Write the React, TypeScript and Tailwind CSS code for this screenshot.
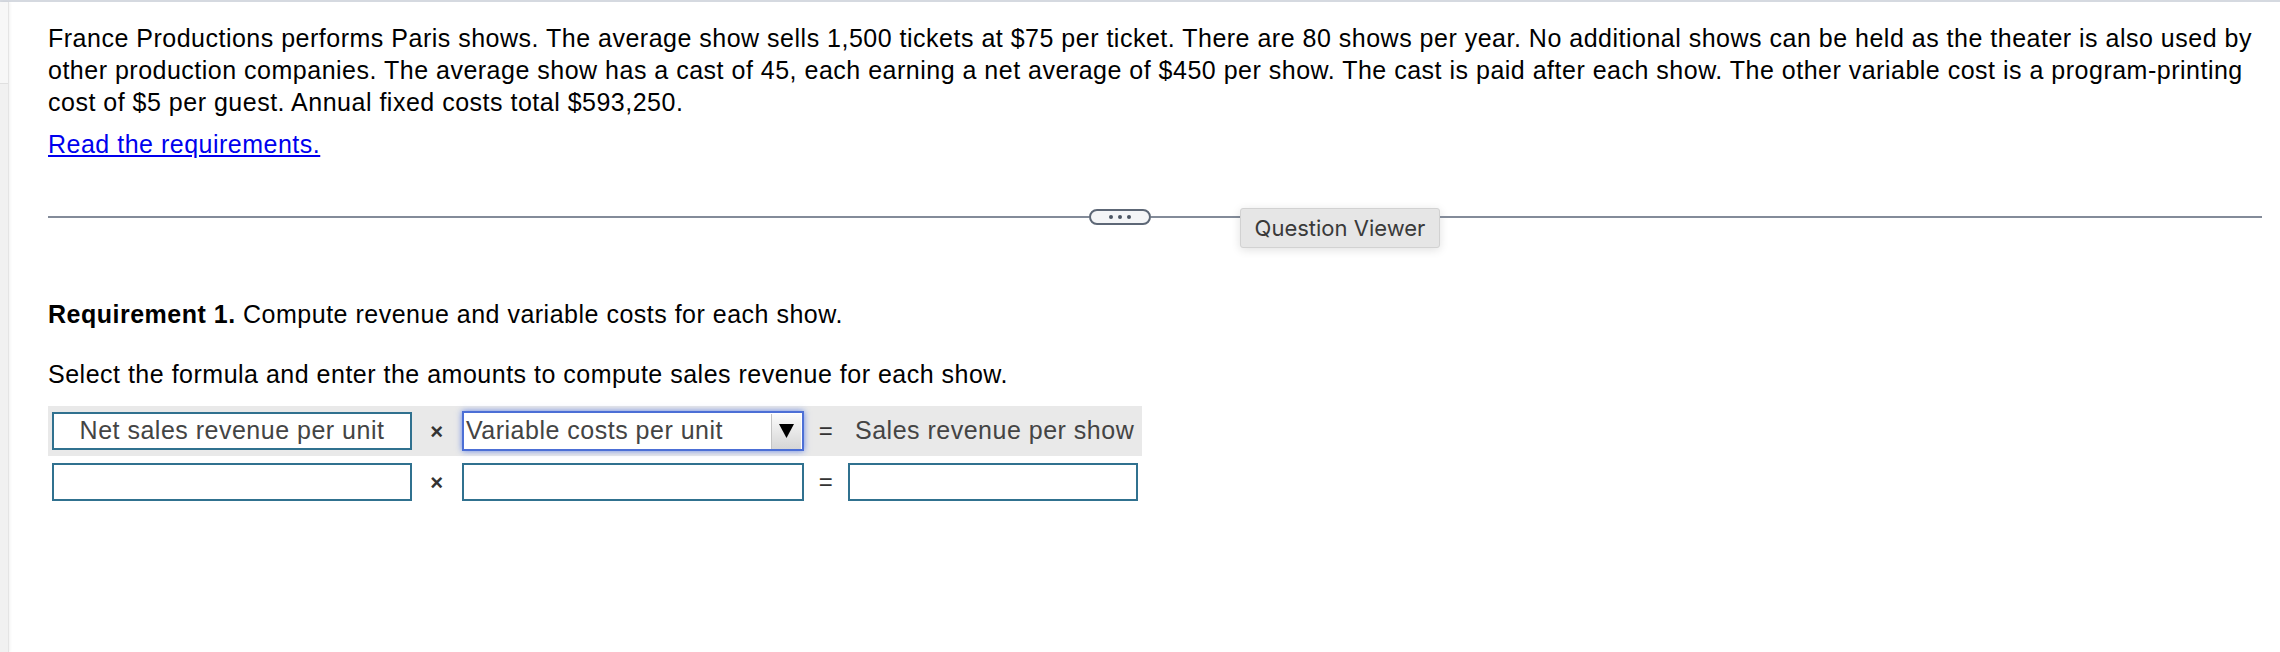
export default function App() {
    return <div className="flex min-h-screen bg-white border-t-2 border-[#d5d9e0] font-['Liberation_Sans',Arial,sans-serif] text-black">
        <SideStrip />
        <div className="flex-1 pl-[39px] pr-[18px] pt-[20px]">
            <p className="text-[25px] leading-[32px] tracking-[0.5px]">
                France Productions performs Paris shows. The average show sells 1,500 tickets at $75 per ticket. There are 80 shows per year. No additional shows can be held as the theater is also used by other production companies. The average show has a cast of 45, each earning a net average of $450 per show. The cast is paid after each show. The other variable cost is a program-printing cost of $5 per guest. Annual fixed costs total $593,250.
            </p>
            <p className="mt-[10px] text-[25px] leading-[32px] tracking-[0.5px]">
                <a href="#" className="text-[#0000ee] underline">Read the requirements.</a>
            </p>

            <Divider />

            <p className="mt-[50px] text-[25px] leading-[32px] tracking-[0.5px]">
                <span className="font-bold">Requirement 1.</span> Compute revenue and variable costs for each show.
            </p>
            <p className="mt-[28px] text-[25px] leading-[32px] tracking-[0.5px]">
                Select the formula and enter the amounts to compute sales revenue for each show.
            </p>

            <FormulaTable />
        </div>
    </div>
}

function SideStrip() {
    return <div className="w-[9px] shrink-0 flex flex-col border-r border-[#e4e4e4] shadow-[1px_0_3px_rgba(0,0,0,0.06)]">
        <div className="h-[82px] bg-[#f7f7f7] border-b border-[#e0e0e0]" />
        <div className="flex-1 bg-[#f1f1f1]" />
    </div>
}

function Divider() {
    return <div className="mt-[48px] flex items-start">
        <div className="mt-[8px] h-[2px] w-[1041px] bg-[#838b99]" />
        <div className="mt-[1px] h-[16px] w-[62px] rounded-full border-2 border-[#5d6776] bg-[#f4f5f7] flex items-center justify-center gap-[5px]">
            <span className="h-[4px] w-[4px] rounded-full bg-[#4b5563]" />
            <span className="h-[4px] w-[4px] rounded-full bg-[#4b5563]" />
            <span className="h-[4px] w-[4px] rounded-full bg-[#4b5563]" />
        </div>
        <div className="mt-[8px] h-[2px] w-[89px] bg-[#838b99]" />
        <div className="h-[40px] w-[200px] flex items-center justify-center rounded-[3px] border border-[#d2d2d2] bg-[#e6e6e6] shadow-[0_2px_10px_rgba(0,0,0,0.12)] font-['Inter',sans-serif] text-[22px] text-[#3a3a3a]">
            Question Viewer
        </div>
        <div className="mt-[8px] h-[2px] flex-1 bg-[#838b99]" />
    </div>
}

function FormulaTable() {
    return <div className="mt-[16px] text-[25px] tracking-[0.5px] text-[#444]">
        <div className="w-[1094px] h-[50px] flex items-center pl-[4px] bg-[#e9e9e9]">
            <div className="w-[360px] h-[38px] flex items-center justify-center border-2 border-[#30718f] bg-white">
                Net sales revenue per unit
            </div>
            <div className="w-[50px] text-center text-[22px] font-bold text-[#333]">×</div>
            <div className="w-[342px] h-[40px] flex items-center border-2 border-[#4c6fd6] bg-white shadow-[0_0_6px_rgba(70,110,230,0.8)]">
                <span className="flex-1 pl-[2px]">Variable costs per unit</span>
                <span className="w-[30px] h-[35px] mr-[1px] flex items-center justify-center border-l border-[#c4c4c4] bg-gradient-to-b from-[#fbfbfb] to-[#d6d6d6]">
                    <svg width="15" height="14" viewBox="0 0 15 14">
                        <polygon points="0,0 15,0 7.5,14" fill="#000" />
                    </svg>
                </span>
            </div>
            <div className="w-[44px] text-center text-[24px] text-[#333]">=</div>
            <div className="pl-[7px]">Sales revenue per show</div>
        </div>
        <div className="mt-[7px] flex items-center pl-[4px]">
            <input className="w-[360px] h-[38px] border-2 border-[#30718f] bg-white outline-none" />
            <div className="w-[50px] text-center text-[22px] font-bold text-[#333]">×</div>
            <input className="w-[342px] h-[38px] border-2 border-[#30718f] bg-white outline-none" />
            <div className="w-[44px] text-center text-[24px] text-[#333]">=</div>
            <input className="w-[290px] h-[38px] border-2 border-[#30718f] bg-white outline-none" />
        </div>
    </div>
}
